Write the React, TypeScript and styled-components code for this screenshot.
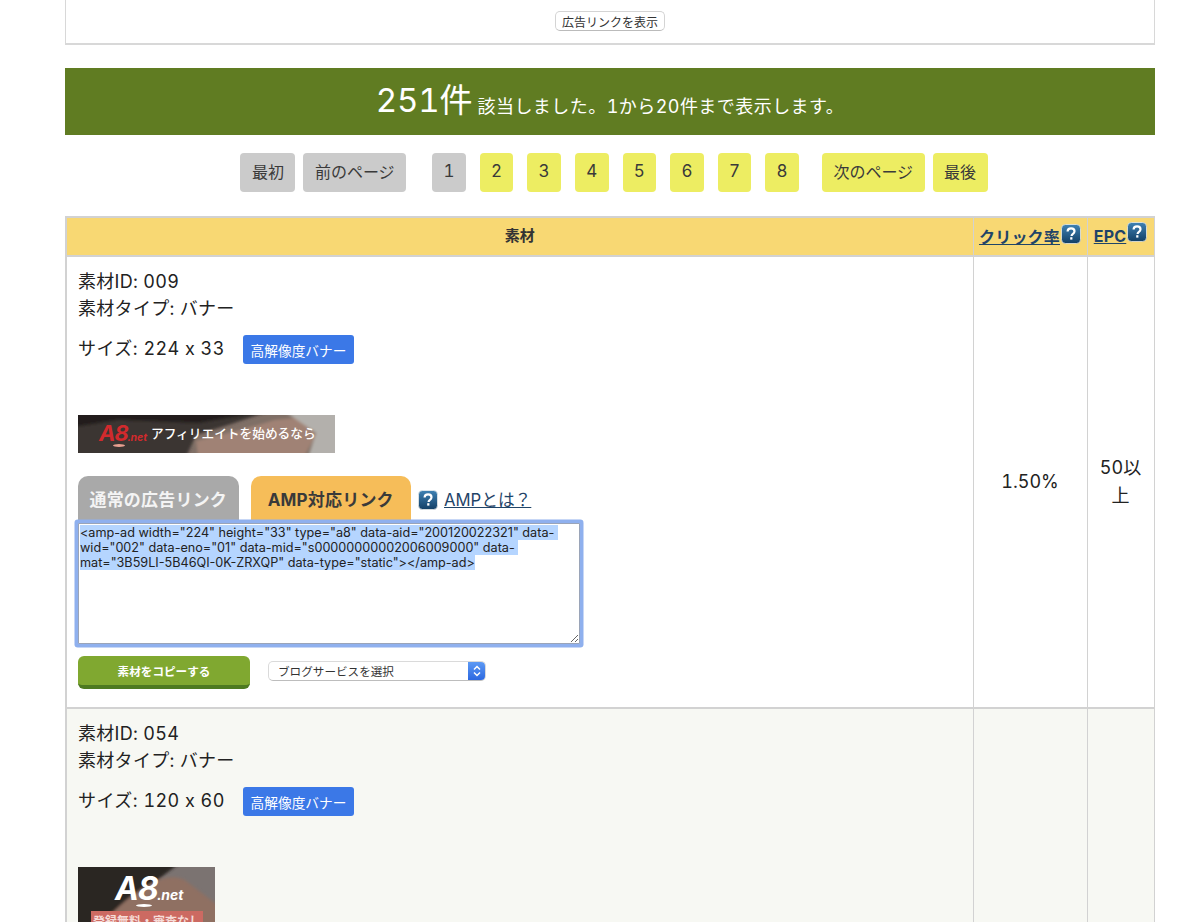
import { FC, useEffect, useRef } from 'react';
import styled, { createGlobalStyle } from 'styled-components';

const FONT = `Inter, "Noto Sans CJK JP", sans-serif`;

const pageItems = ['1', '2', '3', '4', '5', '6', '7', '8'];
const ampCode =
  '<amp-ad width="224" height="33" type="a8" data-aid="200120022321" data-wid="002" data-eno="01" data-mid="s00000000002006009000" data-mat="3B59LI-5B46QI-0K-ZRXQP" data-type="static"></amp-ad>';

const HelpIcon: FC = () => (
  <svg width="20" height="20" viewBox="0 0 20 20" aria-hidden="true">
    <defs>
      <linearGradient id="helpBg" x1="0" y1="0" x2="0" y2="1">
        <stop offset="0" stopColor="#3f82b4" />
        <stop offset="1" stopColor="#123f66" />
      </linearGradient>
    </defs>
    <rect x="0.5" y="0.5" width="19" height="19" rx="4" fill="url(#helpBg)" stroke="#f4f4f0" strokeOpacity="0.7" />
    <path
      d="M6.6 7.6c0-2 1.5-3.2 3.5-3.2s3.4 1.1 3.4 2.9c0 1.4-.8 2.1-1.8 2.8-.8.6-1.1.9-1.1 1.8"
      fill="none"
      stroke="#fff"
      strokeWidth="2.2"
    />
    <rect x="9.2" y="13.2" width="2.2" height="2.4" fill="#fff" />
  </svg>
);

const WideBanner: FC = () => (
  <BannerWide>
    <svg width="100%" height="100%" viewBox="0 0 257 38" preserveAspectRatio="none" aria-hidden="true">
      <defs>
        <filter id="softWide">
          <feGaussianBlur stdDeviation="1.4" />
        </filter>
      </defs>
      <rect width="257" height="38" fill="#7f6f66" />
      <g filter="url(#softWide)">
        <polygon points="-4,-4 192,-4 150,10 118,20 108,42 -4,42" fill="#3a3431" />
        <polygon points="-4,-4 190,-4 120,8 40,5 -4,12" fill="#221e1c" />
        <path d="M118,26 C150,18 175,12 196,5 L224,2 L238,20 L226,42 L120,42 Z" fill="#a08274" />
        <path d="M206,-4 L262,-4 L262,42 L230,42 L238,18 Z" fill="#b3b0ac" />
      </g>
    </svg>
    <BannerLogo>
      A8<small>.net</small>
      <LogoBar />
    </BannerLogo>
    <BannerCopy>アフィリエイトを始めるなら</BannerCopy>
  </BannerWide>
);

const SquareBanner: FC = () => (
  <BannerSquare>
    <svg width="100%" height="100%" viewBox="0 0 137 120" preserveAspectRatio="none" aria-hidden="true">
      <defs>
        <filter id="softSquare">
          <feGaussianBlur stdDeviation="1.5" />
        </filter>
      </defs>
      <rect width="137" height="120" fill="#7b7371" />
      <g filter="url(#softSquare)">
        <polygon points="-4,-4 102,-4 70,20 30,50 -4,124" fill="#2a2523" />
        <path d="M30,50 C60,20 90,2 108,14 L142,40 L142,110 L50,100 Z" fill="#8f6f62" />
      </g>
    </svg>
    <BannerLogoLarge>
      A8<small>.net</small>
      <LogoBarLarge />
    </BannerLogoLarge>
    <BannerTag>登録無料・審査なし</BannerTag>
  </BannerSquare>
);

const CodeBox: FC = () => {
  const ref = useRef<HTMLTextAreaElement>(null);
  useEffect(() => {
    ref.current?.focus();
    ref.current?.select();
  }, []);
  return <CodeArea ref={ref} readOnly defaultValue={ampCode} spellCheck={false} />;
};

export default function App() {
  return (
    <>
      <GlobalStyle />
      <Page>
        <TopBox>
          <ShowButton type="button">広告リンクを表示</ShowButton>
        </TopBox>

        <ResultBand>
          <strong>251件</strong> 該当しました。1から20件まで表示します。
        </ResultBand>

        <Pager>
          <PagerGroup>
            <PageBtn $off>最初</PageBtn>
            <PageBtn $off>前のページ</PageBtn>
          </PagerGroup>
          <PagerNums>
            {pageItems.map((n) => (
              <PageNum key={n} $off={n === '1'}>
                {n}
              </PageNum>
            ))}
          </PagerNums>
          <PagerGroup>
            <PageBtn>次のページ</PageBtn>
            <PageBtn>最後</PageBtn>
          </PagerGroup>
        </Pager>

        <Table>
          <colgroup>
            <col style={{ width: 907 }} />
            <col style={{ width: 114 }} />
            <col style={{ width: 67 }} />
          </colgroup>
          <thead>
            <tr>
              <HeadCell>素材</HeadCell>
              <HeadCell>
                <HeadLink href="#">クリック率</HeadLink>
                <HeadHelp>
                  <HelpIcon />
                </HeadHelp>
              </HeadCell>
              <HeadCell>
                <HeadLink href="#">EPC</HeadLink>
                <HeadHelp>
                  <HelpIcon />
                </HeadHelp>
              </HeadCell>
            </tr>
          </thead>
          <tbody>
            <tr>
              <MaterialCell>
                <InfoLine>素材ID: 009</InfoLine>
                <InfoLine>素材タイプ: バナー</InfoLine>
                <SizeRow>
                  <SizeText>サイズ: 224 x 33</SizeText>
                  <HiResBadge>高解像度バナー</HiResBadge>
                </SizeRow>
                <BannerSlot>
                  <WideBanner />
                </BannerSlot>
                <TabRow>
                  <Tab>通常の広告リンク</Tab>
                  <Tab $active>AMP対応リンク</Tab>
                  <AmpHelp href="#">
                    <HelpIcon />
                    <span>AMPとは？</span>
                  </AmpHelp>
                </TabRow>
                <CodeBox />
                <ActionRow>
                  <CopyButton type="button">素材をコピーする</CopyButton>
                  <BlogSelect>
                    <span>ブログサービスを選択</span>
                    <SelectArrow>
                      <svg width="10" height="14" viewBox="0 0 10 14" aria-hidden="true">
                        <path d="M2 5.5 5 2.5 8 5.5M2 8.5 5 11.5 8 8.5" fill="none" stroke="#fff" strokeWidth="1.5" />
                      </svg>
                    </SelectArrow>
                  </BlogSelect>
                </ActionRow>
              </MaterialCell>
              <ValueCell>1.50%</ValueCell>
              <ValueCell>50以上</ValueCell>
            </tr>
            <OddRow>
              <MaterialCell>
                <InfoLine>素材ID: 054</InfoLine>
                <InfoLine>素材タイプ: バナー</InfoLine>
                <SizeRow>
                  <SizeText>サイズ: 120 x 60</SizeText>
                  <HiResBadge>高解像度バナー</HiResBadge>
                </SizeRow>
                <BannerSlot>
                  <SquareBanner />
                </BannerSlot>
              </MaterialCell>
              <ValueCell />
              <ValueCell />
            </OddRow>
          </tbody>
        </Table>
      </Page>
    </>
  );
}

const GlobalStyle = createGlobalStyle`
  html, body {
    margin: 0;
    padding: 0;
    background: #fff;
    overflow: hidden;
  }
  body {
    font-family: ${FONT};
    font-variant-numeric: tabular-nums;
    color: #222;
  }
`;

const Page = styled.div`
  width: 1090px;
  height: 922px;
  margin-left: 65px;
  overflow: hidden;
`;

const TopBox = styled.div`
  height: 45px;
  display: flex;
  justify-content: center;
  padding-top: 11px;
  box-sizing: border-box;
  background: #fff;
  border: 1px solid #d8d8d8;
  border-top: 0;
  border-bottom-width: 2px;
`;

const ShowButton = styled.button`
  width: 110px;
  height: 20px;
  padding: 0;
  font: 12px ${FONT};
  color: #333;
  background: #fff;
  border: 1px solid #d4d4d4;
  border-bottom-color: #bbb;
  border-radius: 5px;
`;

const ResultBand = styled.div`
  height: 67px;
  margin-top: 23px;
  line-height: 66px;
  text-align: center;
  background: #607c22;
  color: #fff;
  font-size: 18px;
  letter-spacing: 0.45px;
  strong {
    position: relative;
    top: -1px;
    font-size: 33px;
    font-weight: normal;
    letter-spacing: -0.2px;
  }
`;

const Pager = styled.nav`
  display: flex;
  justify-content: center;
  margin: 18px 0 24px;
  padding-left: 8px;
`;

const PagerGroup = styled.div`
  display: flex;
  gap: 8px;
`;

const PagerNums = styled.div`
  display: flex;
  gap: 14px;
  margin: 0 23px 0 26px;
`;

const PageBtn = styled.span<{ $off?: boolean }>`
  height: 39px;
  padding: 0 11.5px 3px;
  box-sizing: border-box;
  display: flex;
  align-items: center;
  font-size: 16px;
  color: #3a3a3a;
  border-radius: 4px;
  background: ${(p) => (p.$off ? '#cbcbcb' : '#eded62')};
`;

const PageNum = styled(PageBtn)`
  width: 33.6px;
  padding: 0 0 3px;
  justify-content: center;
  font-size: 17px;
`;

const Table = styled.table`
  width: 1088px;
  table-layout: fixed;
  border-collapse: collapse;
  border: 2px solid #d2d2d2;
  border-right-width: 1px;
`;

const HeadCell = styled.th`
  height: 39px;
  padding: 0 0 4px;
  box-sizing: border-box;
  background: #f8d873;
  border: 1px solid #d2d2d2;
  border-bottom-width: 2px;
  font-size: 15px;
  color: #333;
  white-space: nowrap;
`;

const HeadLink = styled.a`
  position: relative;
  top: 2px;
  font-size: 16px;
  letter-spacing: 0.2px;
  color: #1f4468;
`;

const HeadHelp = styled.span`
  position: relative;
  top: -3px;
  margin-left: 1px;
  display: inline-block;
  vertical-align: middle;
  line-height: 0;
`;

const OddRow = styled.tr`
  background: #f7f8f3;
`;

const MaterialCell = styled.td`
  padding: 11px 11px 18px;
  border: 1px solid #d2d2d2;
  border-bottom-width: 2px;
  font-size: 18px;
  letter-spacing: 0.3px;
  vertical-align: top;
`;

const ValueCell = styled.td`
  padding: 0 12px;
  border: 1px solid #d2d2d2;
  border-bottom-width: 2px;
  font-size: 18px;
  line-height: 28px;
  text-align: center;
`;

const InfoLine = styled.div`
  height: 27px;
  line-height: 27px;
`;

const SizeRow = styled.div`
  height: 29px;
  display: flex;
  align-items: center;
  gap: 18px;
  margin-top: 13px;
`;

const SizeText = styled.span`
  width: 147px;
  padding-bottom: 5px;
  letter-spacing: 0.45px;
  white-space: nowrap;
`;

const HiResBadge = styled.span`
  width: 111px;
  height: 29px;
  display: flex;
  align-items: center;
  justify-content: center;
  font-size: 13.7px;
  letter-spacing: 0;
  color: #fff;
  background: #3b78e7;
  border-radius: 3px;
`;

const BannerSlot = styled.div`
  margin-top: 51px;
`;

const BannerWide = styled.div`
  position: relative;
  width: 257px;
  height: 38px;
  line-height: 0;
  overflow: hidden;
`;

const BannerSquare = styled.div`
  position: relative;
  width: 137px;
  height: 120px;
  line-height: 0;
  overflow: hidden;
`;

const BannerLogo = styled.span`
  position: absolute;
  left: 21px;
  top: 18px;
  line-height: 0;
  font-size: 22px;
  font-style: italic;
  font-weight: bold;
  letter-spacing: -1px;
  color: #d12a2d;
  small {
    font-size: 10.5px;
    letter-spacing: 0;
  }
`;

const LogoBar = styled.i`
  position: absolute;
  left: 14px;
  top: 11px;
  width: 12px;
  height: 3px;
  border-radius: 50%;
  background: #e8a090;
`;

const LogoBarLarge = styled(LogoBar)`
  left: 21px;
  top: 15px;
  width: 16px;
  height: 3px;
  background: #fff;
`;

const BannerCopy = styled.span`
  position: absolute;
  left: 73px;
  top: 19px;
  line-height: 0;
  font-size: 12.7px;
  font-weight: 500;
  letter-spacing: 0;
  color: #fff;
  white-space: nowrap;
`;

const BannerLogoLarge = styled.span`
  position: absolute;
  left: 37px;
  top: 22px;
  line-height: 0;
  font-size: 32px;
  font-style: italic;
  font-weight: bold;
  letter-spacing: -1px;
  color: #fff;
  small {
    font-size: 14px;
    letter-spacing: 0;
  }
`;

const BannerTag = styled.span`
  position: absolute;
  left: 13px;
  top: 44px;
  width: 112px;
  height: 28px;
  line-height: 22px;
  text-align: center;
  font-size: 12px;
  font-weight: bold;
  letter-spacing: 0;
  color: #f6dcd8;
  background: #cc6a62;
`;

const TabRow = styled.div`
  display: flex;
  gap: 12px;
  margin-top: 23px;
  height: 47px;
`;

const Tab = styled.span<{ $active?: boolean }>`
  width: 160.5px;
  padding-bottom: 2px;
  box-sizing: border-box;
  display: flex;
  align-items: center;
  justify-content: center;
  font-size: 17px;
  font-weight: bold;
  letter-spacing: 0.2px;
  border-radius: 10px 10px 0 0;
  color: ${(p) => (p.$active ? '#3a3a3a' : '#f4f4f4')};
  background: ${(p) => (p.$active ? '#f6bd59' : '#a9a9a9')};
`;

const AmpHelp = styled.a`
  display: flex;
  align-items: center;
  gap: 6px;
  margin-left: -5px;
  font-size: 16.7px;
  letter-spacing: 0;
  color: #1f4468;
  span {
    padding-bottom: 2px;
  }
`;

const CodeArea = styled.textarea`
  display: block;
  position: relative;
  width: 502px;
  height: 121px;
  margin: 0;
  padding: 1px 0 0 1px;
  box-sizing: border-box;
  font: 12.65px/15px ${FONT};
  font-variant-numeric: normal;
  color: #222;
  background: #fff;
  border: 1px solid #9aa4b8;
  border-radius: 1px;
  outline: none;
  box-shadow: 0 0 0 3.5px #8fb0ee;
  overflow: hidden;
  resize: both;
  &::selection {
    background: #b5d5ff;
    color: #222;
  }
`;

const ActionRow = styled.div`
  display: flex;
  align-items: flex-start;
  gap: 18px;
  margin-top: 12px;
`;

const CopyButton = styled.button`
  width: 172px;
  height: 33px;
  padding: 0;
  font: bold 11.6px ${FONT};
  color: #fff;
  background: #80a830;
  border: 0;
  border-bottom: 4px solid #4d7a20;
  border-radius: 6px;
  box-sizing: border-box;
`;

const BlogSelect = styled.div`
  width: 218px;
  height: 20px;
  margin-top: 5px;
  box-sizing: border-box;
  display: flex;
  align-items: center;
  justify-content: space-between;
  padding-left: 9px;
  font-size: 11.6px;
  letter-spacing: 0;
  color: #333;
  background: #fff;
  border: 1px solid #dadada;
  border-bottom-color: #bdbdbd;
  border-radius: 5px;
  overflow: hidden;
`;

const SelectArrow = styled.span`
  width: 17px;
  height: 20px;
  display: flex;
  align-items: center;
  justify-content: center;
  background: linear-gradient(#5f9cf5, #2a66e0);
`;
